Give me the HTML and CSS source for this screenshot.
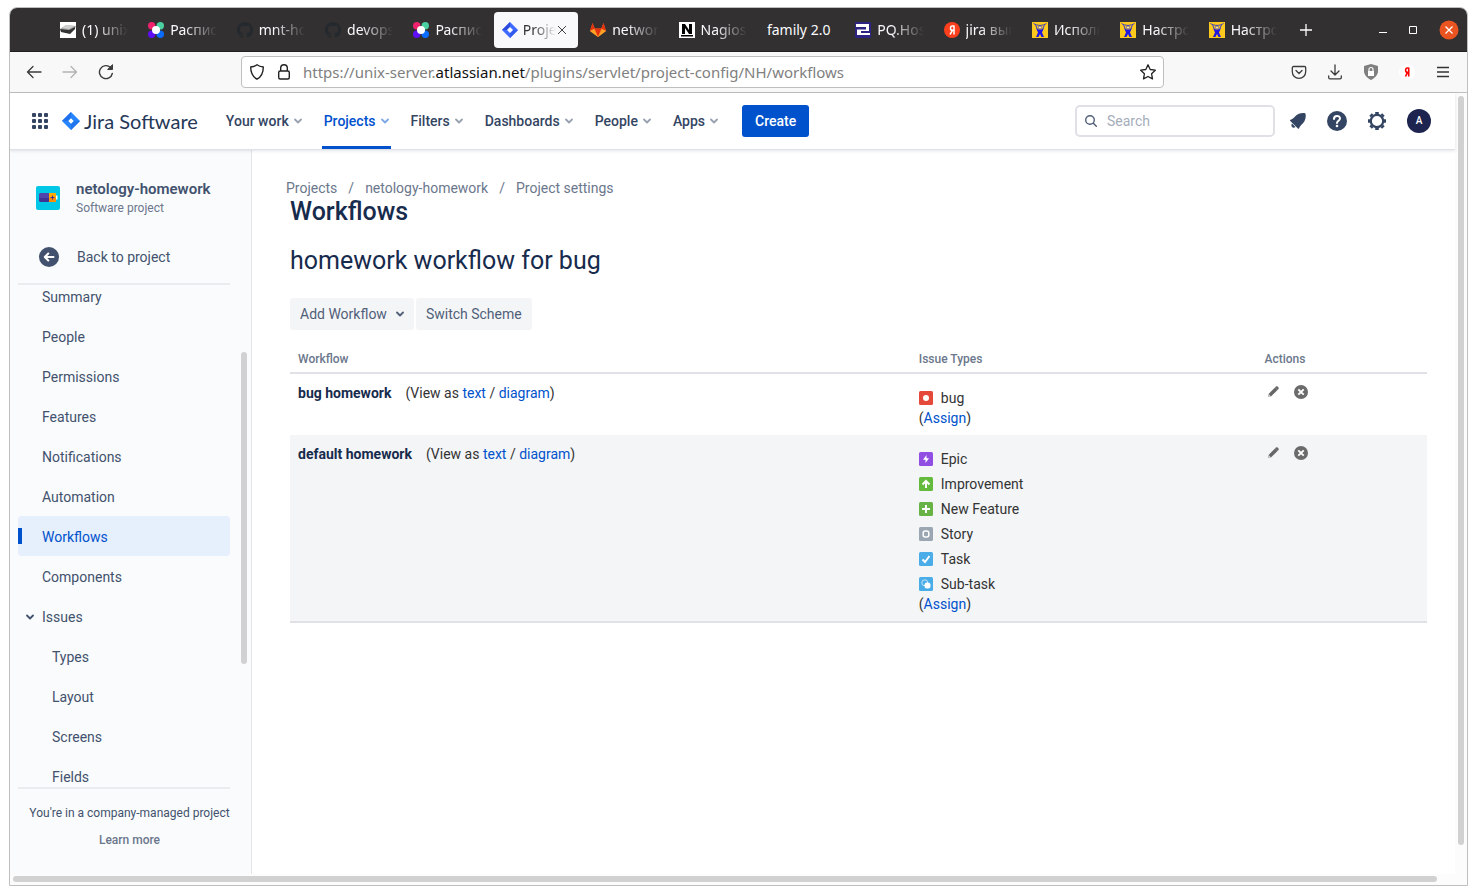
FILE: index.html
```html
<!DOCTYPE html>
<html lang="en">
<head>
<meta charset="utf-8">
<title>Workflows - Jira Software</title>
<link rel="stylesheet" href="styles.css">
</head>
<body>
<svg class="defs" aria-hidden="true">
  <symbol id="flower" viewBox="0 0 16 16"><circle cx="3.700" cy="3.700" r="3.700" fill="#f0216d"/><circle cx="12.300" cy="3.700" r="3.700" fill="#4bd0a0"/><circle cx="3.700" cy="12.300" r="3.700" fill="#5e0ff5"/><circle cx="12.300" cy="12.300" r="3.700" fill="#0a6cff"/><path d="M8 8L1 6l5-5z" fill="#f0216d"/><path d="M8 8l2-7 5 5z" fill="#4bd0a0"/><path d="M8 8l-2 7-5-5z" fill="#5e0ff5"/><path d="M8 8l2 7 5-5z" fill="#0a6cff"/><circle cx="8" cy="8" r="4" fill="#fff"/></symbol>
  <symbol id="github" viewBox="0 0 16 16"><path fill="#24292e" d="M8 0C3.580 0 0 3.580 0 8c0 3.540 2.290 6.530 5.470 7.590.4.070.55-.17.55-.38 0-.19-.01-.82-.01-1.490-2.010.37-2.530-.49-2.690-.94-.09-.23-.48-.94-.82-1.130-.28-.15-.68-.52-.01-.53.63-.01 1.080.58 1.230.82.72 1.210 1.870.87 2.330.66.070-.52.28-.87.51-1.070-1.780-.2-3.640-.89-3.640-3.950 0-.87.31-1.590.82-2.150-.08-.2-.36-1.020.08-2.120 0 0 .67-.21 2.200.82a7.600 7.600 0 0 1 4 0c1.530-1.040 2.200-.82 2.200-.82.44 1.100.16 1.920.08 2.120.51.56.82 1.270.82 2.150 0 3.070-1.870 3.750-3.650 3.950.29.25.54.73.54 1.480 0 1.070-.01 1.930-.01 2.200 0 .21.15.46.55.38A8 8 0 0 0 16 8c0-4.420-3.580-8-8-8z"/></symbol>
  <symbol id="diamond" viewBox="0 0 16 16"><path d="M8 0l8 8-8 8-8-8z" fill="#3f6cff"/><path d="M8 0v5.200L5.200 8H0z" fill="#2a4bdc"/><path d="M8 16v-5.200L10.800 8H16z" fill="#3159ee"/><path d="M8 5l3 3-3 3-3-3z" fill="#fff"/></symbol>
  <symbol id="joomla" viewBox="0 0 16 16"><path fill="#ffc91d" d="M0 0h16v16H0z"/><path d="M1.500 1.500c4 2.500 9 2.500 13 0" stroke="#3a3fc0" fill="none"/><path d="M3.500 2.500l1.500 4M12.500 2.500l-1.500 4" stroke="#3a3fc0" fill="none"/><path d="M4 6l3 1.500h2L12 6l-2 4.500 2 4.500h-2.500L8 12l-1.500 3H4l2-4.500z" fill="#2118e0"/><circle cx="8" cy="5.500" r="1.600" fill="#ffe98a" stroke="#3a3fc0" stroke-width=".7"/></symbol>
  <symbol id="chev" viewBox="0 0 8 6"><path d="M1 1.500l3 3 3-3" fill="none" stroke="currentColor" stroke-width="1.800" stroke-linecap="round" stroke-linejoin="round"/></symbol>
  <symbol id="pencil" viewBox="0 0 12 12"><path d="M1 11l.8-3.200L8 1.500 10.500 4 4.200 10.200z" fill="#666"/><path d="M8 1.500l1-1c.5-.4 1-.4 1.500 0l1 1c.4.500.4 1 0 1.500l-1 1z" fill="#666"/><path d="M1.800 8.200l2 2-2.600.7z" fill="#ddd"/></symbol>
  <symbol id="remove" viewBox="0 0 14 14"><circle cx="7" cy="7" r="7" fill="#6b6b6b"/><path d="M4.300 4.300l5.400 5.400m0-5.400l-5.400 5.400" stroke="#fff" stroke-width="1.900"/></symbol>
</svg>
<div class="window">
  <div class="tabbar">
    <div class="tabs">
      <button class="tab"><svg viewBox="0 0 16 16"><path fill="#fff" d="M0 0h16v16H0z"/><path d="M0 7l6-4 10 1-1 3-5 4-9-2z" fill="#a7a7a7"/><path d="M0 7l9 1 6-3v2l-5 5-9-2z" fill="#333"/><path d="M2 6l4-3 8 1-5 3z" fill="#d0d0d0"/></svg><span>(1) unix</span></button>
      <button class="tab"><svg><use href="#flower"/></svg><span>Распис</span></button>
      <button class="tab"><svg><use href="#github"/></svg><span>mnt-ho</span></button>
      <button class="tab"><svg><use href="#github"/></svg><span>devops</span></button>
      <button class="tab"><svg><use href="#flower"/></svg><span>Распис</span></button>
      <button class="tab active"><svg><use href="#diamond"/></svg><span>Proje</span><svg class="tab-close" viewBox="0 0 10 10"><path d="M1 1l8 8m0-8L1 9" stroke="#444" fill="none"/></svg></button>
      <button class="tab"><svg viewBox="0 0 16 16"><path d="M8 15L0 9l2.500-8 2.300 5.500h6.400L13.500 1 16 9z" fill="#fc6d26"/><path d="M2.500 1L0 9l4.800-2.500zM13.500 1L16 9l-4.800-2.500zM4.800 6.500h6.400L8 15z" fill="#e2320f"/><path d="M0 9l8 6-4-8zM16 9l-8 6 4-8z" fill="#fca326"/></svg><span>networ</span></button>
      <button class="tab"><svg viewBox="0 0 16 16"><path fill="#fff" d="M0 0h16v16H0z"/><path d="M3 12V2h3l4 6V2h3v10h-3L6 6v6zM2 13h12v1.500H2z"/></svg><span>Nagios</span></button>
      <button class="tab plain"><span>family 2.0</span></button>
      <button class="tab"><svg viewBox="0 0 16 16"><rect width="16" height="16" rx="1" fill="#2d2383"/><path d="M1 2h13v7H6v2h9v2H2V7.500h9V5H1z" fill="#fff"/></svg><span>PQ.Hos</span></button>
      <button class="tab"><svg viewBox="0 0 16 16"><circle cx="8" cy="8" r="8" fill="#fc3f1d"/><path d="M10 3.500v9M10 4H8.500C5.800 4 5.800 8.300 8.500 8.300H10M8.500 8.300L6 12.500" stroke="#fff" stroke-width="1.500" fill="none"/></svg><span>jira вып</span></button>
      <button class="tab"><svg><use href="#joomla"/></svg><span>Исполь</span></button>
      <button class="tab"><svg><use href="#joomla"/></svg><span>Настро</span></button>
      <button class="tab"><svg><use href="#joomla"/></svg><span>Настро</span></button>
    </div>
    <div class="window-controls">
      <button aria-label="New tab"><svg width="12" height="12"><path d="M6 0v12M0 6h12" stroke="#fff" stroke-width="1.300"/></svg></button>
      <button class="minimize" aria-label="Minimize"><svg width="10" height="10"><path d="M1 7.500h8" stroke="#fff"/></svg></button>
      <button aria-label="Maximize"><svg width="8" height="8"><path d="M.5.500h7v7h-7z" fill="none" stroke="#fff"/></svg></button>
      <button aria-label="Close"><svg width="20" height="20"><circle cx="10" cy="10" r="9.500" fill="#e95420"/><path d="M6.500 6.500l7 7m0-7l-7 7" stroke="#fff" stroke-width="1.300"/></svg></button>
    </div>
  </div>
  <div class="toolbar">
    <div class="history">
      <button aria-label="Back"><svg width="16" height="16" fill="none" stroke="#3b3b3b" stroke-width="1.300" stroke-linecap="round" stroke-linejoin="round"><path d="M15 8H1.500M7 2.500L1.500 8 7 13.500"/></svg></button>
      <button aria-label="Forward"><svg width="16" height="16" fill="none" stroke="#b3b3b3" stroke-width="1.300" stroke-linecap="round" stroke-linejoin="round"><path d="M1 8h13.500M9 2.500L14.500 8 9 13.500"/></svg></button>
      <button aria-label="Reload"><svg width="16" height="16" fill="none" stroke="#3b3b3b" stroke-width="1.400" stroke-linecap="round"><path d="M14.300 9.500A6.500 6.500 0 1 1 12.500 3.500"/><path d="M10 5.500h4.500V1z" fill="#3b3b3b" stroke-width="1" stroke-linejoin="round"/></svg></button>
    </div>
    <div class="address">
      <svg width="16" height="16" fill="none" stroke="#222" stroke-width="1.400" stroke-linejoin="round"><path d="M8 .8c2 1.500 4 2 6.300 2.200 0 6-1.300 9.500-6.300 12.200C3 12.500 1.700 9 1.700 3 4 2.800 6 2.300 8 .8z"/></svg>
      <svg width="16" height="16" fill="none" stroke="#222" stroke-width="1.400"><rect x="2.700" y="7" width="10.600" height="8" rx="1.500"/><path d="M4.700 7V4a3.300 3.300 0 0 1 6.600 0v3"/></svg>
      <div class="url">https://unix-server.<b>atlassian.net</b>/plugins/servlet/project-config/NH/workflows</div>
      <button aria-label="Bookmark"><svg width="16" height="16" fill="none" stroke="#222" stroke-width="1.300" stroke-linejoin="round"><path d="M8 .8l2.200 4.700 5.100.7-3.700 3.600.9 5.100L8 12.500 3.500 14.900l.9-5.100L.7 6.200l5.100-.7z"/></svg></button>
    </div>
    <div class="extensions">
      <button aria-label="Pocket"><svg width="16" height="16" fill="none" stroke="#3b3b3b" stroke-width="1.300" stroke-linecap="round" stroke-linejoin="round"><path d="M2.500 2.500h11c.7 0 1.200.5 1.200 1.200v4a6.700 6.700 0 0 1-13.400 0v-4c0-.7.5-1.200 1.200-1.200z"/><path d="M5 6.500l3 3 3-3"/></svg></button>
      <button aria-label="Downloads"><svg width="16" height="16" fill="none" stroke="#3b3b3b" stroke-width="1.300" stroke-linecap="round" stroke-linejoin="round"><path d="M8 1v9.500M4 7l4 4 4-4M1.700 12v1.500c0 .8.500 1.300 1.300 1.300h10c.8 0 1.300-.5 1.300-1.300V12"/></svg></button>
      <button aria-label="Privacy"><svg width="16" height="16"><path d="M8 0l7 2v5c0 4-3 7-7 9-4-2-7-5-7-9V2z" fill="#808080"/><path d="M5 7h6v5H5z" fill="#fff"/><path d="M6 7V5.500a2 2 0 0 1 4 0V7" fill="none" stroke="#fff" stroke-width="1.200"/></svg></button>
      <button aria-label="Yandex"><svg width="16" height="16"><circle cx="8" cy="8" r="8" fill="#fff"/><path d="M9.700 3.500v9M9.700 4H8.500C6 4 6 8.300 8.500 8.300h1.200M8.500 8.300L6.500 12.500" stroke="#f00" stroke-width="1.600" fill="none"/></svg></button>
      <button aria-label="Menu"><svg width="16" height="16"><path d="M2 3.500h12M2 8h12M2 12.500h12" stroke="#333" stroke-width="1.400"/></svg></button>
    </div>
  </div>
  <div class="viewport">
    <div class="page">
      <header class="header">
        <button class="apps" aria-label="Switch to"><i></i><i></i><i></i><i></i><i></i><i></i><i></i><i></i><i></i></button>
        <a class="logo" href="#"><svg viewBox="0 0 16 16"><path d="M8 0l8 8-8 8-8-8z" fill="#2684ff"/><path d="M8 0v5.200L5.200 8H0z" fill="#1f72ec"/><path d="M8 16v-5.200L10.800 8H16z" fill="#2176ee"/><path d="M8 5.600L10.400 8 8 10.400 5.600 8z" fill="#fff"/></svg><span>Jira Software</span></a>
        <nav class="nav">
          <button>Your work<svg><use href="#chev"/></svg></button>
          <button class="current">Projects<svg><use href="#chev"/></svg></button>
          <button>Filters<svg><use href="#chev"/></svg></button>
          <button>Dashboards<svg><use href="#chev"/></svg></button>
          <button>People<svg><use href="#chev"/></svg></button>
          <button>Apps<svg><use href="#chev"/></svg></button>
        </nav>
        <button class="create">Create</button>
        <label class="search"><svg width="12" height="12" fill="none" stroke="#505f79" stroke-width="1.400" stroke-linecap="round"><circle cx="5" cy="5" r="4.300"/><path d="M8.300 8.300l3 3"/></svg><input type="search" placeholder="Search" aria-label="Search"></label>
        <div class="tools">
          <button aria-label="Notifications"><svg width="18" height="18" fill="#344563"><path d="M16.500 1.500c-3-1-7.500 0-10 2.500-1.500 1.500-3 3.200-5 3.800-.6.200-.7.800-.2 1.200l7.600 7.600c.4.400 1 .3 1.200-.3.600-2 2.200-3.400 3.700-4.900C16.500 8.800 17.300 4.500 16.500 1.500z"/><path d="M3 11.500l3.500 3.500C5.500 16 4 16 3.200 15.300S2 12.500 3 11.500z"/></svg></button>
          <button aria-label="Help"><svg width="20" height="20"><circle cx="10" cy="10" r="10" fill="#344563"/><path d="M7 8c0-4 6-4 6-.5 0 2.200-3 2.300-3 4.500" fill="none" stroke="#fff" stroke-width="2" stroke-linecap="round"/><circle cx="10" cy="15" r="1.300" fill="#fff"/></svg></button>
          <button aria-label="Settings"><svg width="20" height="20" viewBox="-10 -10 20 20"><circle r="6.200" fill="none" stroke="#344563" stroke-width="2.200"/><path d="M0-9v2M0 7v2M-9 0h2M7 0h2M-6.400-6.400l1.500 1.500M4.900 4.900l1.500 1.500M6.400-6.400L4.900-4.900M-4.900 4.900l-1.500 1.500" stroke="#344563" stroke-width="3.600"/></svg></button>
          <button class="avatar" aria-label="Account">A</button>
        </div>
      </header>
      <div class="body">
        <aside class="sidebar">
          <div class="project">
            <svg width="24" height="24"><rect width="24" height="24" rx="2" fill="#00c7e5"/><path d="M4 7h10v9H5l-2-1V8z" fill="#5243aa"/><path d="M3 12h10v4H5l-2-1z" fill="#403294"/><path d="M13 7h7v9h-7z" fill="#ffab00"/><path d="M13 12h7v4h-7z" fill="#ff8b00"/><path d="M20 9.500h1.500v4H20z" fill="#fff"/><path d="M16.500 9.500v4M14.500 11.500h4" stroke="#403294"/></svg>
            <div><strong>netology-homework</strong><small>Software project</small></div>
          </div>
          <a class="back" href="#"><svg width="20" height="20"><circle cx="10" cy="10" r="10" fill="#42526e"/><path d="M14.500 10H6M9.300 6.500L5.800 10l3.500 3.500" fill="none" stroke="#fff" stroke-width="2" stroke-linecap="round" stroke-linejoin="round"/></svg>Back to project</a>
          <div class="menu">
            <ul>
              <li><a href="#">Summary</a></li>
              <li><a href="#">People</a></li>
              <li><a href="#">Permissions</a></li>
              <li><a href="#">Features</a></li>
              <li><a href="#">Notifications</a></li>
              <li><a href="#">Automation</a></li>
              <li><a class="selected" href="#">Workflows</a></li>
              <li><a href="#">Components</a></li>
              <li><a class="group" href="#"><svg><use href="#chev"/></svg>Issues</a></li>
              <li><a class="child" href="#">Types</a></li>
              <li><a class="child" href="#">Layout</a></li>
              <li><a class="child" href="#">Screens</a></li>
              <li><a class="child" href="#">Fields</a></li>
            </ul>
            <div class="menu-track"><div class="menu-thumb"></div></div>
          </div>
          <div class="managed"><p>You're in a company-managed project</p><a href="#">Learn more</a></div>
        </aside>
        <main class="main">
          <div class="crumbs"><a href="#">Projects</a><span>/</span><a href="#">netology-homework</a><span>/</span><a href="#">Project settings</a></div>
          <div class="content">
            <h1>Workflows</h1>
            <h2>homework workflow for bug</h2>
            <div class="actions"><button>Add Workflow<svg><use href="#chev"/></svg></button><button>Switch Scheme</button></div>
            <table>
              <thead><tr><th class="c-flow">Workflow</th><th class="c-types">Issue Types</th><th>Actions</th></tr></thead>
              <tbody>
                <tr>
                  <td><strong>bug homework</strong>(View as <a href="#">text</a> / <a href="#">diagram</a>)</td>
                  <td>
                    <ul>
                      <li><svg viewBox="0 0 14 14"><rect width="14" height="14" rx="1.500" fill="#e5493a"/><circle cx="7" cy="7" r="3" fill="#fff"/></svg>bug</li>
                    </ul>
                    (<a href="#">Assign</a>)
                  </td>
                  <td><div class="row-tools"><button aria-label="Edit"><svg width="12" height="12"><use href="#pencil"/></svg></button><button aria-label="Remove"><svg width="14" height="14"><use href="#remove"/></svg></button></div></td>
                </tr>
                <tr class="striped">
                  <td><strong>default homework</strong>(View as <a href="#">text</a> / <a href="#">diagram</a>)</td>
                  <td>
                    <ul>
                      <li><svg viewBox="0 0 14 14"><rect width="14" height="14" rx="1.500" fill="#904ee2"/><path d="M7.500 3L4 7.800h2.500V11L10 6.300H7.500z" fill="#fff"/></svg>Epic</li>
                      <li><svg viewBox="0 0 14 14"><rect width="14" height="14" rx="1.500" fill="#63ba3c"/><path d="M7 11V4M3.500 7.500L7 4l3.500 3.500" fill="none" stroke="#fff" stroke-width="2"/></svg>Improvement</li>
                      <li><svg viewBox="0 0 14 14"><rect width="14" height="14" rx="1.500" fill="#67b346"/><path d="M7 3v8M3 7h8" stroke="#fff" stroke-width="2"/></svg>New Feature</li>
                      <li><svg viewBox="0 0 14 14"><rect width="14" height="14" rx="1.500" fill="#9aa6b2"/><rect x="4.200" y="4" width="5.600" height="6" rx="2" fill="none" stroke="#fff" stroke-width="1.500"/></svg>Story</li>
                      <li><svg viewBox="0 0 14 14"><rect width="14" height="14" rx="1.500" fill="#4bade8"/><path d="M3.500 7.500L6 10l4.500-6" fill="none" stroke="#fff" stroke-width="2"/></svg>Task</li>
                      <li><svg viewBox="0 0 14 14"><rect width="14" height="14" rx="1.500" fill="#4bade8"/><rect x="3" y="3" width="5.500" height="5.500" rx="2" fill="none" stroke="#c5e4f8"/><rect x="5.500" y="5.500" width="6" height="6" rx="2.500" fill="#fff"/></svg>Sub-task</li>
                    </ul>
                    (<a href="#">Assign</a>)
                  </td>
                  <td><div class="row-tools"><button aria-label="Edit"><svg width="12" height="12"><use href="#pencil"/></svg></button><button aria-label="Remove"><svg width="14" height="14"><use href="#remove"/></svg></button></div></td>
                </tr>
              </tbody>
            </table>
          </div>
        </main>
      </div>
    </div>
    <div class="track-y"><div class="thumb"></div></div>
    <div class="track-x"><div class="thumb"></div></div>
  </div>
</div>
</body>
</html>
```
FILE: styles.css
```css
* { box-sizing: border-box; }
body {
  margin: 0;
  height: 100vh;
  padding: 7px 9px 9px;
  background: #fff;
  color: #172b4d;
  font: 14px/20px Roboto, "Noto Sans", sans-serif;
}
button, input { font: inherit; color: inherit; border: 0; background: none; padding: 0; margin: 0; }
a { color: #0052cc; text-decoration: none; }
ul { list-style: none; margin: 0; padding: 0; }
h1, h2, p { margin: 0; }
svg { display: block; flex: none; }
.defs { position: absolute; width: 0; height: 0; }

.window {
  display: flex;
  flex-direction: column;
  height: 100%;
  border: 1px solid #bfbfbf;
  border-radius: 8px 8px 0 0;
  overflow: hidden;
}

.tabbar {
  display: flex;
  align-items: center;
  flex: none;
  height: 44px;
  padding-left: 40px;
  background: #323031;
  border-bottom: 1px solid #211f20;
  color: #fbfbfe;
  font-family: "Noto Sans", sans-serif;
}
.tabs { display: flex; flex: 1; min-width: 0; }
.tab {
  display: flex;
  align-items: center;
  flex: 1;
  min-width: 0;
  height: 36px;
  margin: 0 2px;
  padding: 0 8px;
  border-radius: 4px;
  gap: 6px;
}
.tab svg { width: 16px; height: 16px; }
.tab span {
  flex: 1;
  overflow: hidden;
  white-space: nowrap;
  text-align: left;
  mask-image: linear-gradient(to right, #000 30%, transparent);
}
.tab.plain span { mask-image: none; }
.tab.active { background: #f9f9fb; color: #333; gap: 5px; }
.tab .tab-close { width: 10px; height: 10px; margin: 0 3px 0 -4px; }
.window-controls {
  display: flex;
  align-items: center;
  justify-content: space-between;
  flex: none;
  width: 180px;
  padding: 0 8px 0 13px;
}
.window-controls .minimize { margin-left: 44px; }

.toolbar {
  display: flex;
  align-items: center;
  flex: none;
  height: 41px;
  padding: 0 16px;
  background: #f8f8f8;
  border-bottom: 1px solid #bfbfbf;
}
.history, .extensions { display: flex; gap: 20px; }
.address {
  display: flex;
  align-items: center;
  flex: 1;
  gap: 11px;
  min-width: 0;
  height: 32px;
  padding: 0 7px;
  margin: 0 127px;
  background: #fff;
  border: 1px solid #bfbfbf;
  border-radius: 4px;
}
.url { flex: 1; color: #808080; font-family: "Noto Sans", sans-serif; font-size: 15px; white-space: nowrap; overflow: hidden; }
.url b { color: #111; font-weight: 400; }

.viewport {
  display: grid;
  flex: 1;
  grid-template: minmax(0, 1fr) 11px / minmax(0, 1fr) 12px;
  min-height: 0;
  background: #fcfcfc;
}
.page { display: flex; flex-direction: column; background: #fff; min-height: 0; }
.track-y { padding: 3px 3px 29px; }
.track-x { padding: 2px 18px 3px 3px; }
.thumb { height: 100%; border-radius: 3px; background: #d1d1d1; }

.header {
  display: flex;
  align-items: center;
  flex: none;
  height: 57px;
  padding: 0 24px 0 22px;
  border-bottom: 1px solid #dfe1e6;
  box-shadow: 0 1px 3px #091e421f;
  z-index: 1;
  color: #344563;
}
.apps { display: grid; grid-template-columns: repeat(3, 4px); gap: 2px; margin-right: 14px; }
.apps i { width: 4px; height: 4px; border-radius: 1px; background: #344563; }
.logo { display: flex; align-items: center; gap: 4px; color: #253858; font: 20px/24px Lato, sans-serif; white-space: nowrap; }
.logo svg { width: 18px; height: 18px; }
.nav { display: flex; height: 100%; margin-left: 26px; gap: 18px; }
.nav button {
  display: flex;
  align-items: center;
  gap: 5px;
  padding: 0 2px;
  font-weight: 500;
  border-bottom: 3px solid transparent;
  border-top: 3px solid transparent;
}
.nav svg { width: 8px; height: 6px; opacity: .5; }
.nav .current { color: #0052cc; border-bottom-color: #0052cc; }
.create { height: 32px; padding: 0 13px; margin-left: 22px; border-radius: 3px; background: #0052cc; color: #fff; font-weight: 500; }
.search {
  display: flex;
  align-items: center;
  gap: 10px;
  width: 200px;
  height: 32px;
  padding: 0 8px;
  margin-left: auto;
  border: 2px solid #dfe1e6;
  border-radius: 5px;
}
.search input { width: 100%; outline: 0; }
.search input::placeholder { color: #a5adba; opacity: 1; }
.tools { display: flex; align-items: center; gap: 20px; margin-left: 14px; }
.avatar { width: 24px; height: 24px; border-radius: 50%; background: #1d2450; color: #fff; font-size: 10px; font-weight: 500; }

.body { display: flex; flex: 1; min-height: 0; }
.sidebar {
  display: flex;
  flex-direction: column;
  flex: none;
  width: 242px;
  padding: 28px 3px 24px 8px;
  background: #fafbfc;
  border-right: 1px solid #e4e5e8;
  color: #42526e;
}
.sidebar a { color: inherit; }
.project { display: flex; align-items: center; gap: 16px; height: 40px; padding: 0 18px; }
.project div { display: grid; }
.project strong { font-size: 15px; font-weight: 600; }
.project small { color: #6b778c; font-size: 12px; line-height: 18px; }
.back { display: flex; align-items: center; gap: 18px; height: 40px; margin: 19px 0 6px; padding: 0 21px; }
.menu { display: flex; flex: 1; min-height: 0; overflow: hidden; }
.menu ul { flex: 1; overflow: hidden; border: solid #ebecf0; border-width: 2px 0; }
.menu li:first-child { margin-top: -9px; }
.menu li a { display: flex; align-items: center; height: 40px; padding: 2px 0 0 24px; border-radius: 4px; }
.menu li .selected {
  color: #0052cc;
  background: linear-gradient(#0052cc, #0052cc) left / 4px 16px no-repeat #e6effc;
}
.menu li .group { padding-left: 8px; gap: 8px; }
.menu li .group svg { width: 8px; height: 6px; }
.menu li .child { padding-left: 34px; }
.menu-track { width: 18px; padding: 69px 1px 125px 11px; }
.menu-thumb { height: 100%; border-radius: 3px; background: #d1d1d1; }
.managed { padding: 14px 7px 0 0; text-align: center; font-size: 12px; line-height: 20px; white-space: nowrap; }
.managed p { margin-bottom: 7px; }
.managed a { color: #6b778c; font-weight: 500; }

.main { flex: 1; min-width: 0; padding: 28px 28px 0 34px; }
.crumbs { display: flex; gap: 11px; color: #6b778c; }
.crumbs a { color: inherit; }
.content { padding-left: 4px; }
h1 { font-size: 25px; line-height: 28px; font-weight: 500; margin-bottom: 20px; }
h2 { font-size: 25px; line-height: 30px; font-weight: 400; margin-bottom: 22px; }
.actions { display: flex; gap: 2px; margin-bottom: 16px; }
.actions button { display: flex; align-items: center; gap: 9px; height: 32px; padding: 0 10px; border-radius: 3px; background: #f4f5f7; color: #505f79; }
.actions svg { width: 8px; height: 6px; }
table { width: 100%; table-layout: fixed; border-collapse: collapse; border-bottom: 2px solid #dfe1e6; }
th { padding: 3px 8px; text-align: left; color: #6b778c; font-size: 12px; font-weight: 500; }
thead { border-bottom: 2px solid #dfe1e6; }
.c-flow { width: 54.600%; }
.c-types { width: 30.400%; }
td { padding: 9px 8px 7px; vertical-align: top; color: #333; }
td strong { margin-right: 14px; color: #172b4d; font-weight: 700; }
.striped { background: #f4f5f7; }
td li { display: flex; align-items: center; gap: 8px; height: 20px; margin-top: 5px; }
td li svg { width: 14px; height: 14px; }
.row-tools { display: flex; align-items: center; gap: 15px; height: 18px; padding-left: 3px; }
```
